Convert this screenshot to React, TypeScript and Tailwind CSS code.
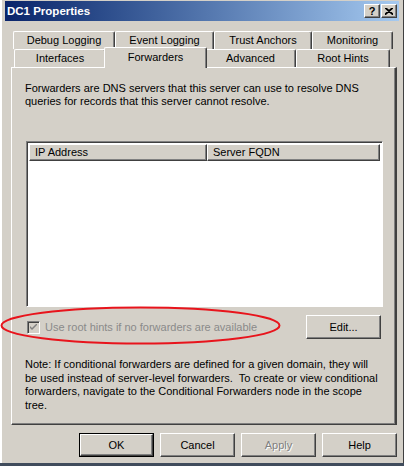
import React from 'react';

// classic Win2000 raised / sunken edges
const raised = 'border-t border-l border-t-white border-l-white border-r border-b border-r-[#404040] border-b-[#404040] shadow-[inset_-1px_-1px_#808080]';
const sunken = 'border-t border-l border-t-[#808080] border-l-[#808080] border-r border-b border-r-white border-b-white shadow-[inset_1px_1px_#404040,inset_-1px_-1px_#d4d0c8]';

const Tab = ({ label, w, active = false }: { label: string; w: number; active?: boolean }) => (
  <div
    style={{ width: w }}
    className={`flex items-center justify-center rounded-t-[2px] border-t border-l border-t-white border-l-white border-r border-r-[#404040] shadow-[inset_-1px_0_#808080] bg-[#d4d0c8] ${
      active ? 'h-[21px] -mt-[2px] -mx-[2px] z-10 pb-[2px]' : 'h-[18px]'
    }`}
  >
    {label}
  </div>
);

const Button = ({ label, primary = false, disabled = false }: { label: string; primary?: boolean; disabled?: boolean }) => (
  <div className={`w-[75px] h-[24px] ${primary ? 'border border-black' : ''}`}>
    <div className={`w-full h-full flex items-center justify-center ${raised}`}>
      <span className={disabled ? 'text-[#808080] [text-shadow:1px_1px_0_#fff]' : 'text-black'}>{label}</span>
    </div>
  </div>
);

export default function App() {
  return (
    <div
      className="relative w-[404px] h-[466px] bg-[#d4d0c8] overflow-hidden text-[11px] leading-[13px] text-black flex flex-col"
      style={{ fontFamily: '"Liberation Sans", Arial, sans-serif' }}
    >
      <div className="flex-1 flex flex-col pt-[1px] pl-[3px] pr-[4px] border-l-[3px] border-l-white border-r border-r-[#404040] -ml-[1px]">
        {/* title bar */}
        <div className="h-[20px] flex items-center justify-between pl-[2px] pr-[2px] bg-gradient-to-r from-[#0a246a] to-[#a6caf0]">
          <span className="text-white font-bold text-[11.5px]">DC1 Properties</span>
          <div className="flex gap-[1px]">
            <div className={`w-[16px] h-[14px] bg-[#d4d0c8] flex items-center justify-center font-bold text-[11px] ${raised}`}>?</div>
            <div className={`w-[16px] h-[14px] bg-[#d4d0c8] flex items-center justify-center ${raised}`}>
              <svg width="8" height="7" viewBox="0 0 8 7">
                <path d="M0 0 L8 7 M1 0 L8 6 M8 0 L0 7 M7 0 L0 6" stroke="#000" strokeWidth="1.2" />
              </svg>
            </div>
          </div>
        </div>

        {/* tabs */}
        <div className="mt-[10px] ml-[6px] flex flex-col">
          <div className="flex ml-[2px]">
            <Tab label="Debug Logging" w={102} />
            <Tab label="Event Logging" w={99} />
            <Tab label="Trust Anchors" w={98} />
            <Tab label="Monitoring" w={81} />
          </div>
          <div className="flex ml-[3px] relative z-10">
            <Tab label="Interfaces" w={92} />
            <Tab label="Forwarders" w={103} active />
            <Tab label="Advanced" w={91} />
            <Tab label="Root Hints" w={94} />
          </div>

          {/* panel */}
          <div className={`relative w-[386px] h-[358px] -mt-[1px] pt-[14px] px-[13px] ${raised} border-r-2 flex flex-col`}>
            <p>
              Forwarders are DNS servers that this server can use to resolve DNS
              <br />
              queries for records that this server cannot resolve.
            </p>

            {/* list view */}
            <div className={`mt-[33px] ml-[1px] w-[357px] h-[166px] bg-white p-[2px] ${sunken} shadow-[inset_1px_1px_#404040]`}>
              <div className="flex h-[17px]">
                <div className={`w-[178px] flex items-center pl-[5px] bg-[#d4d0c8] ${raised}`}>IP Address</div>
                <div className={`flex-1 flex items-center pl-[5px] bg-[#d4d0c8] ${raised}`}>Server FQDN</div>
              </div>
            </div>

            {/* root hints row */}
            <div className="mt-[8px] flex items-center justify-between">
              <div className="flex items-center gap-[5px] ml-[2px]">
                <div className={`w-[13px] h-[13px] bg-[#d4d0c8] flex items-center justify-center ${sunken}`}>
                  <svg width="7" height="7" viewBox="0 0 7 7">
                    <path d="M0 2 L0 4 L2 6 L7 1 L7 -1 L2 4 Z" fill="#808080" />
                  </svg>
                </div>
                <span className="text-[#8a8a8a]">Use root hints if no forwarders are available</span>
              </div>
              <div className={`w-[75px] h-[24px] mr-[1px] flex items-center justify-center ${raised}`}>Edit...</div>
            </div>

            <p className="mt-[19px] leading-[13.5px]">
              Note: If conditional forwarders are defined for a given domain, they will be used instead of server-level forwarders.&nbsp; To create or view conditional forwarders, navigate to the Conditional Forwarders node in the scope tree.
            </p>
          </div>
        </div>

        {/* dialog buttons */}
        <div className="mt-[8px] ml-[74px] flex gap-[6px]">
          <Button label="OK" primary />
          <Button label="Cancel" />
          <Button label="Apply" disabled />
          <Button label="Help" />
        </div>
      </div>

      <div className="h-[3px] bg-[#404c5c]" />

      {/* red annotation ellipse */}
      <svg className="absolute left-0 top-[306px]" width="282" height="40" viewBox="0 0 282 40">
        <ellipse cx="140.5" cy="19.5" rx="139" ry="18" fill="none" stroke="#e8141c" strokeWidth="2" />
      </svg>
    </div>
  );
}
